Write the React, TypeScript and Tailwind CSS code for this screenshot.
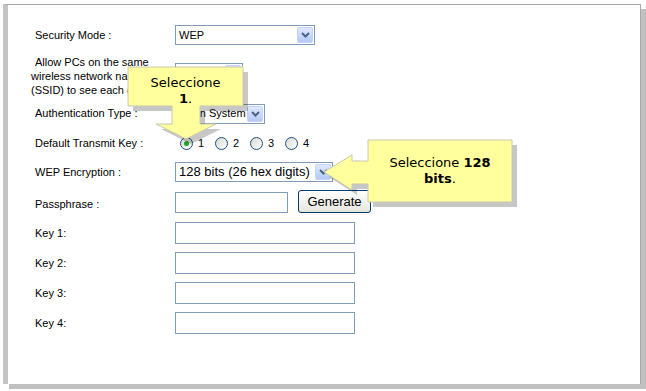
import React from "react";

const labelFont = { fontFamily: '"Liberation Sans", Arial, sans-serif' };

function Chevron() {
  return (
    <svg width="9" height="6" viewBox="0 0 9 6">
      <polyline points="1,1 4.5,4.5 8,1" fill="none" stroke="#4d6185" strokeWidth="2" />
    </svg>
  );
}

function Select({ text, w, big }: { text: string; w: string; big?: boolean }) {
  return (
    <div className={`${w} h-[20px] border border-[#7f9db9] bg-white flex items-center`}>
      <span
        className={`flex-1 overflow-hidden whitespace-nowrap pl-[3px] ${big ? "text-[13px]" : "text-[11px]"} text-black`}
      >
        {text}
      </span>
      <div className="w-[16px] h-[16px] mr-[1px] rounded-[2px] border border-[#c3d3fd] bg-gradient-to-b from-[#e0e9fe] to-[#b4c9f7] flex items-center justify-center">
        <Chevron />
      </div>
    </div>
  );
}

function Radio({ checked, n, first }: { checked?: boolean; n: string; first?: boolean }) {
  return (
    <div className={`flex items-center w-[35px] ${first ? "ml-[5px]" : ""}`}>
      <div className="w-[13px] h-[13px] rounded-full border border-[#1c5180] bg-gradient-to-br from-[#d8d8d2] to-white flex items-center justify-center">
        {checked && <div className="w-[5px] h-[5px] rounded-full bg-[#21a121]" />}
      </div>
      <span className="ml-[5px] text-[11px]">{n}</span>
    </div>
  );
}

function Input({ w }: { w: string }) {
  return <div className={`${w} h-[22px] border border-[#7f9db9] bg-white`} />;
}

export default function App() {
  return (
    <div className="relative w-[646px] h-[391px] bg-white overflow-hidden" style={labelFont}>
      <div className="pt-[4px] pl-[3px]">
        <div className="w-[638px] h-[380px] border-l-[5px] border-l-[#c4c4c4] border-t border-t-[#a8a8a8] border-r border-r-[#a8a8a8] bg-white shadow-[6px_5px_0_#c0c0c0]">
          <div className="flex flex-col pl-[27px] pt-[20px] text-[11px] text-black">
            {/* Security Mode */}
            <div className="flex items-center h-[20px]">
              <div className="w-[140px]">Security Mode :</div>
              <Select text="WEP" w="w-[140px]" />
            </div>
            {/* Allow PCs */}
            <div className="flex mt-[10px] h-[42px]">
              <div className="w-[140px] leading-[14px] ml-[-4px] mr-[4px] whitespace-nowrap">
                <div className="pl-[4px]">Allow PCs on the same</div>
                <div>wireless network name</div>
                <div>(SSID) to see each other</div>
              </div>
              <div className="mt-[8px]">
                <Select text="" w="w-[68px]" />
              </div>
            </div>
            {/* Authentication Type */}
            <div className="flex items-center mt-[6px] h-[21px]">
              <div className="w-[140px]">Authentication Type :</div>
              <Select text="Open System" w="w-[90px]" />
            </div>
            {/* Default Transmit Key */}
            <div className="flex items-center mt-[9px] h-[20px]">
              <div className="w-[140px]">Default Transmit Key :</div>
              <Radio first checked n="1" />
              <Radio n="2" />
              <Radio n="3" />
              <Radio n="4" />
            </div>
            {/* WEP Encryption */}
            <div className="flex items-center mt-[9px] h-[20px]">
              <div className="w-[140px]">WEP Encryption :</div>
              <Select text="128 bits (26 hex digits)" w="w-[158px]" big />
            </div>
            {/* Passphrase */}
            <div className="flex items-start mt-[8px] h-[23px]">
              <div className="w-[140px] mt-[6px]">Passphrase :</div>
              <div className="mt-[2px] w-[113px] h-[21px] border border-[#7f9db9] bg-white" />
              <div className="ml-[10px] w-[73px] h-[23px] rounded-[3px] border border-[#003c74] bg-gradient-to-b from-white to-[#e6e5dd] flex items-center justify-center text-[13px]">
                Generate
              </div>
            </div>
            {/* Keys */}
            {["Key 1:", "Key 2:", "Key 3:", "Key 4:"].map((k, i) => (
              <div key={k} className={`flex items-center h-[22px] ${i === 0 ? "mt-[9px]" : "mt-[8px]"}`}>
                <div className="w-[140px]">{k}</div>
                <Input w="w-[180px]" />
              </div>
            ))}
          </div>
        </div>
      </div>

      {/* Callouts */}
      <svg className="absolute left-0 top-0 pointer-events-none" width="646" height="391">
        <g transform="translate(5,5)">
          <polygon
            points="128,67 243,67 243,106 200,106 200,124 216,124 186,139 156,124 172,124 172,106 128,106"
            fill="rgba(0,0,0,0.22)"
          />
          <polygon
            points="368,140 512,140 512,202 368,202 368,184 352,184 352,190 324,172 352,155 352,161 368,161"
            fill="rgba(0,0,0,0.22)"
          />
        </g>
        <polygon
          points="128,67 243,67 243,106 200,106 200,124 216,124 186,139 156,124 172,124 172,106 128,106"
          fill="#ffff9e"
          stroke="#c8c8b0"
          strokeWidth="1"
        />
        <polygon
          points="368,140 512,140 512,202 368,202 368,184 352,184 352,190 324,172 352,155 352,161 368,161"
          fill="#ffff9e"
          stroke="#c8c8b0"
          strokeWidth="1"
        />
      </svg>
      <div
        className="absolute left-[128px] top-[75px] w-[115px] text-center text-[13px] leading-[16px] text-black"
        style={{ fontFamily: '"DejaVu Sans", Verdana, sans-serif' }}
      >
        <div>Seleccione</div>
        <div>
          <b>1</b>.
        </div>
      </div>
      <div
        className="absolute left-[368px] top-[155px] w-[144px] text-center text-[13px] leading-[16px] text-black"
        style={{ fontFamily: '"DejaVu Sans", Verdana, sans-serif' }}
      >
        <div>
          Seleccione <b>128</b>
        </div>
        <div>
          <b>bits</b>.
        </div>
      </div>
    </div>
  );
}
